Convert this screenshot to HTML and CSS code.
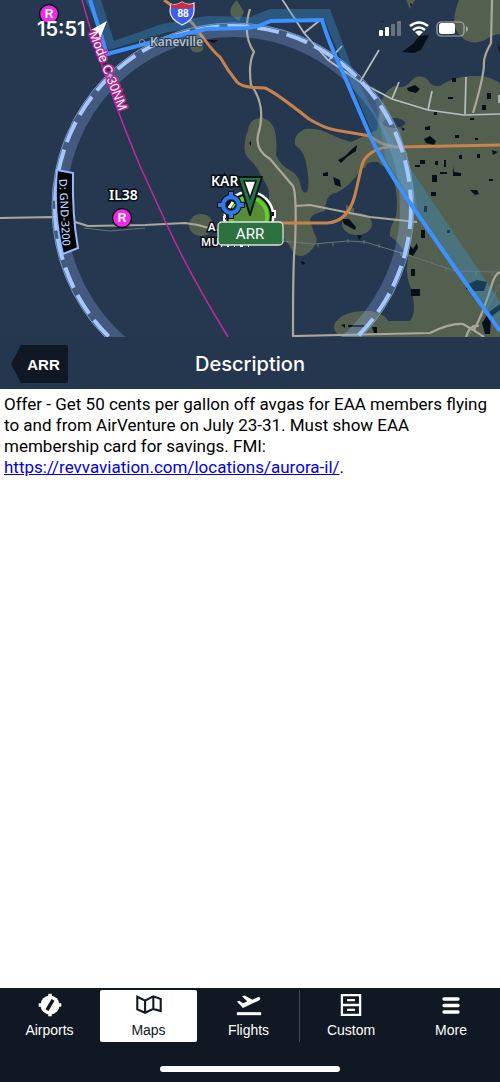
FILE: index.html
```html
<!DOCTYPE html>
<html lang="en">
<head>
<meta charset="utf-8">
<meta name="viewport" content="width=device-width, initial-scale=1">
<title>Description</title>
<link rel="stylesheet" href="styles.css">
</head>
<body>
<div class="app">
  <section class="map" aria-label="Map">
    <svg class="map-canvas" viewBox="0 0 500 337" preserveAspectRatio="xMidYMid slice">
      <rect width="500" height="337" fill="#26384f"/>
      <g fill="#53604f">
        <path d="M459 0 Q450 22 458 33 Q467 46 483 41 Q492 35 500 34 V0Z"/>
        <path d="M500 83 Q488 75 475 76 Q455 75 440 86 Q431 87 428 80 Q419 72 411 81 Q404 90 394 86 Q383 92 381 104 L377 130 Q360 138 351 142 Q340 139 330 134 Q319 128 305 129 Q293 134 295 145 Q305 151 307 168 Q310 185 307 192 Q302 195 300 182 Q296 173 291 171 Q280 165 276 155 Q279 122 263 118 Q250 117 248 130 Q240 152 250 160 Q258 167 262 178 Q272 190 268 203 L276 230 Q290 244 294 254 Q304 260 313 248 Q320 240 314 233 L310 220 Q310 214 325 211 Q326 193 336 193 Q350 187 362 168 L388 166 Q400 190 396 216 Q389 229 390 236 Q400 243 408 258 Q405 274 410 286 Q418 310 410 321 L388 321 Q385 314 371 311 Q343 310 335 323 Q331 332 343 337 H500Z"/>
        <ellipse cx="357" cy="224" rx="15" ry="11"/>
        <path d="M346 205 l8 3 v16 h-8z"/>
        <path d="M237 0 Q228 8 231 15 L239 21 L244 12Z"/>
        <path d="M406 0 L410 9 L415 0Z"/>
        <path d="M193 29 L190 48 Q195 56 203 50 L204 39Z"/>
        <ellipse cx="201" cy="225" rx="12" ry="11"/>
      </g>
      <g fill="#26384f">
        <ellipse cx="394" cy="123" rx="11" ry="5"/>
        <path d="M365 170 Q365 160 378 162 L390 173 L385 190 L365 195Z"/>
      </g>
      <g fill="#071019">
        <path d="M402 52 L413 44 L419 36 L429 35 L421 50 L414 53Z"/>
        <path d="M407 88 l8 -3 5 4 -4 4 -8 -2zM338 160 l7 -4 7 -7 5 -4 -1 6 -9 6 -6 6zM424 139 l6 -3 6 5 -2 4 -8 -2zM497 43 l3 5 v5zM333 177 l7 3 1 7 -6 -2zM409 244 l4 5 4 -6 1 5 -5 8 -4 -2zM466 285 l11 -5 10 2 -3 9 -9 0 -9 -2zM411 289 h9 v7 h-9zM411 269 h4 v7 h-4zM482 323 l7 -11 11 -8 v6 l-9 7 -1 17 h-5zM372 327 h5 v6 h-3zM348 325 h16 v2 h-16zM341 325 l4 -1 v4zM342 219 h7 l7 8 -1 3 -11 -6zM357 235 l5 1 -3 4zM323 173 l5 -1 v4h-5zM207 40 h11 l-4 3zM249 143 l2 -2 0 5zM301 261 l5 2 -4 2z"/>
        <path d="M432 175 h5 v7 h-5zM431 192 h5 v4 h-5zM440 172 h7 v2 h-7zM453 166 l1 6 7 1 v3 h-8zM470 190 h7 l2 4 -4 1zM489 179 h4 v2 h-4zM421 230 h4 v8 h-4zM424 206 h3 v6 h-3zM452 78 h4 v4 h-4zM487 93 h4 v6 h-4zM482 105 h4 v5 h-4zM448 97 h5 v2 h-5zM425 127 l5 -1 v4 h-5zM401 127 l4 2 -2 2zM455 135 h4 v3h-4zM470 118 h4 v2 h-4zM492 150 l6 2 -5 3zM477 154 h3 v4 h-3zM459 155 h3 v4 h-3zM420 160 h5 v4 h-5zM435 161 h3 v4h-3zM444 160 h2 v7 h-2zM415 165 h5 v2 h-5zM434 112 h3 v3 h-3zM475 138 h3 v2 h-3zM447 230 h3 v3 h-3zM381 21 l3 0 -2 1zM410 3 l2 1 -1 3z"/>
      </g>
      <g fill="none" stroke="#687575" stroke-width="1">
        <path d="M282 241 L313 244 L348 241 L365 242 L408 255 L455 271 L500 272M84 228 L110 231 L145 228"/>
        <path d="M288 239v4M302 241v4M318 243v4M333 242v4M348 239v4M364 240v4M379 244v4M401 252v4M432 261v4M446 267v4M476 272v4M492 271v4" />
        <path d="M468 337 L486 310 L500 284"/>
      </g>
      <g fill="none" stroke="#aba89b" stroke-width="2.2" stroke-linejoin="round">
        <path d="M0 218 L55 217 L72 221 L88 226 L145 225 L185 223 L198 225 L220 231"/>
        <path d="M250 9 Q242 35 254 52 Q248 63 251 85 Q267 106 258 135 Q255 150 270 159 L293 186 Q297 195 295 245 Q293 254 293 336 L430 333 Q450 323 463 324 Q474 330 484 337M474 330 Q484 311 492 284 Q495 274 500 272M466 337 Q470 324 479 326M295 206 L310 205 L370 217 L417 222M492 0 L491 43 Q483 57 484 65 Q483 80 473 113"/>
      </g>
      <g fill="none" stroke="#b8bec2" stroke-width="1.7">
        <path d="M280 -4 L304 33 L328 60 L360 82 L392 99 L428 110 L464 115 L500 114M304 33 L319 21M329 60 L342 46M360 82 L379 50M392 99 L399 82M428 110 L432 91M465 114 L466 77M499 95 v8"/>
      </g>
      <g fill="none" stroke="#c7834c" stroke-width="3">
        <path d="M164 0 Q185 15 194 25 Q212 51 220 57 Q228 71 237 82 Q242 88 265 88 Q275 92 309 119 Q324 128 335 130 L370 136 Q380 145 397 147 L500 145M398 147 Q380 146 371 153 Q363 158 361 169 L355 195 Q348 222 327 223 L265 223"/>
      </g>

      <ellipse cx="233" cy="207" rx="174" ry="177" fill="none" stroke="#92b7ff" stroke-opacity=".27" stroke-width="14"/>
      <ellipse cx="233" cy="207" rx="181" ry="184" fill="none" stroke="#7895bd" stroke-width="1"/>
      <path d="M85 0 L109 50 L168 32 L206 26 L252 26 L271 19 L324 19 L387 168 L412 206 L500 330 V302 L410 168 L370 105 L352 68 L330 9 H270 L250 17 L207 16 L162 24 L114 41 L101 0Z" fill="#3c9bdd" fill-opacity=".33"/>
      <path d="M373 85 L400 130 L412 180 L418 210 L386 160Z" fill="#82b7e4" fill-opacity=".18"/>
      <ellipse cx="233" cy="207" rx="178" ry="181" fill="none" stroke="#a5c7ff" stroke-width="4" stroke-dasharray="22 8"/>
      <path d="M90 0 L107 54 L160 40 L206 29 L247 28 L258 26 L271 21 L322 20 Q329 43 340 66 L371 138 Q385 167 412 206 L450 261 L500 331" fill="none" stroke="#3c91ff" stroke-width="4"/>
      <path d="M82 0 Q104 80 140 166 L167 225 Q190 275 228 337" fill="none" stroke="#bd2b9e" stroke-width="1.5"/>
      <text transform="translate(89 33) rotate(69)" class="mode-label">Mode C 30NM</text>
      <circle cx="142" cy="42" r="2.5" fill="none" stroke="#87969c"/>
      <text x="150" y="46" class="town-label">Kaneville</text>

      <path d="M57 170 L73 173 Q72 215 78 248 L63 254 Q53 214 57 170Z" fill="#000" stroke="#93baff" stroke-width="2"/>
      <text transform="translate(59 179) rotate(87)" class="altitude-label">D: GND-3200</text>

      <g stroke="#111" stroke-width="1.5" fill="#ef2aed">
        <circle cx="49" cy="14" r="9.5"/><circle cx="122" cy="218" r="9.5"/>
      </g>
      <text x="49" y="18" class="r-label">R</text>
      <text x="122" y="222" class="r-label">R</text>
      <text x="109" y="200" class="field-label">IL38</text>

      <path d="M171 4 Q176 6 182 2 Q188 6 194 3 L194 11 Q194 20 182 25 Q170 19 170 11Z" fill="#405ee8" stroke="#dce5ff" stroke-width="1.3"/>
      <path d="M171 4 Q176 6 182 2 Q188 6 193 4 V8 H171Z" fill="#d32938"/>
      <text x="183" y="17" class="shield-label">88</text>

      <circle cx="249" cy="216" r="23.5" fill="#578c38" stroke="#fff" stroke-width="4"/>
      <path d="M271 211 h4 v6 h-3M228 217 h-4 v4" fill="#111" stroke="#fff" stroke-width="2"/>
      <circle cx="249" cy="216" r="22" fill="#578c38" stroke="#111" stroke-width="2"/>
      <circle cx="249" cy="216" r="18" fill="none" stroke="#60cf2d" stroke-width="4"/>
      <circle cx="249" cy="216" r="16" fill="#578c38"/>
      <text x="211" y="186" class="field-label">KAR</text>
      <text x="208" y="231" class="small-map-label">A</text>
      <text x="201" y="246" class="small-map-label">MU</text>
      <path d="M221 246h1M227 246h2M234 246h1M240 246h3M248 246h1" stroke="#fff" stroke-width="2"/>
      <g>
        <g fill="none" stroke="#111" stroke-width="6"><circle cx="231" cy="205" r="8"/><path d="M231 191v7M231 212v7M217 205h7M238 205h7"/></g>
        <circle cx="231" cy="205" r="8" fill="#283a49" stroke="#2e79ed" stroke-width="4"/>
        <path d="M231 192v6M231 212v6M218 205h6M238 205h6" stroke="#2e79ed" stroke-width="4"/>
        <circle cx="231" cy="205" r="5" fill="#111"/><path d="M229 208 L233 202" stroke="#fff" stroke-width="3"/><path d="M232 208 L235 204" stroke="#65d734" stroke-width="2"/>
      </g>
      <path d="M238 177 H262 L250 215Z" fill="#246f43" stroke="#0b1714" stroke-width="2" stroke-linejoin="round"/>
      <path d="M244 181 H256 L250 198Z" fill="#fff" stroke="#111" stroke-width="1.5"/>
      <rect x="218" y="222" width="65" height="23" rx="4" fill="#2c713f" stroke="#d8e2da" stroke-width="1.3"/>
      <text x="250" y="239" class="pin-label">ARR</text>

      <path d="M91 30 L107 21 L100 38 L98 31Z" fill="#fff"/>
      <text x="37" y="36" class="clock">15:51</text>
      <g fill="#fff"><rect x="379" y="30" width="4" height="6" rx="1"/><rect x="385" y="27" width="4" height="9" rx="1"/><g opacity=".3"><rect x="391" y="24" width="4" height="12" rx="1"/><rect x="397" y="21" width="4" height="15" rx="1"/></g></g>
      <g fill="none" stroke="#fff" stroke-width="2.6"><path d="M410 26 Q419 19 428 26M413 30 Q419 25 425 30"/></g>
      <path d="M415 32 Q419 29 423 32 L419 36Z" fill="#fff"/>
      <rect x="437" y="22" width="27" height="14" rx="4" fill="none" stroke="#a8adad" stroke-width="1.2"/><rect x="439" y="23" width="16" height="11" rx="2.5" fill="#fff"/><path d="M466 26 q4 3 0 6Z" fill="#a8adad"/>
    </svg>
  </section>

  <header class="title-bar">
    <button class="back" type="button">ARR</button>
    <h1 class="title">Description</h1>
  </header>

  <main class="content">
    <p class="offer">Offer - Get 50 cents per gallon off avgas for EAA members flying to and from AirVenture on July 23-31. Must show EAA membership card for savings. FMI: <a href="https://revvaviation.com/locations/aurora-il/">https://revvaviation.com/locations/aurora-il/</a>.</p>
  </main>

  <footer class="footer">
    <nav class="tabs" aria-label="Main">
      <button class="tab" type="button">
        <svg class="icon" viewBox="0 0 30 30"><circle cx="15" cy="15" r="11" fill="currentColor"/><path d="M15 2v26M2 15h26" stroke="currentColor" stroke-width="4"/><path d="M11.500 21 L18.500 9" stroke="#101823" stroke-width="4"/></svg>
        <span>Airports</span>
      </button>
      <button class="tab selected" type="button" aria-current="page">
        <svg class="icon" viewBox="0 0 30 30" fill="none" stroke="currentColor" stroke-width="2.4"><path d="M1.500 5.500 L10.500 10 L20 5 L28.500 8 V22 L20 19.500 L10.500 24 L1.500 20ZM10.500 10V24M20 5V19.500"/></svg>
        <span>Maps</span>
      </button>
      <button class="tab" type="button">
        <svg class="icon" viewBox="0 0 30 30"><path d="M1 25H29" stroke="currentColor" stroke-width="3.500"/><path d="M1 11 L4 10 L8 13 L13 11 L7 5 L10 4 L19 9 L25 6 Q28 5 28 8 L26 10 L8 18.500Z" fill="currentColor"/></svg>
        <span>Flights</span>
      </button>
      <button class="tab divided" type="button">
        <svg class="icon" viewBox="0 0 30 30" fill="none" stroke="currentColor" stroke-width="2.6"><path d="M4.500 3.500H25.500V26.500H4.500ZM4.500 15H25.500M10.500 9.500H19.500M10.500 20.500H19.500"/></svg>
        <span>Custom</span>
      </button>
      <button class="tab" type="button">
        <svg class="icon" viewBox="0 0 30 30"><path d="M7 8H23M7 15.500H23M7 23H23" stroke="currentColor" stroke-width="4" stroke-linecap="round"/></svg>
        <span>More</span>
      </button>
    </nav>
    <div class="home-indicator"></div>
  </footer>
</div>
</body>
</html>
```

FILE: styles.css
```css
* {
  box-sizing: border-box;
}

body {
  margin: 0;
  background: #fff;
  color: #000;
  font-family: Roboto, "Liberation Sans", sans-serif;
}

.app {
  display: flex;
  flex-direction: column;
  min-height: 100vh;
}

.map {
  background: #26384f;
}

.map-canvas {
  display: block;
  width: 100%;
}

.mode-label {
  fill: #fff;
  stroke: #b52394;
  stroke-width: 3px;
  paint-order: stroke;
  font: 13px "Liberation Sans", sans-serif;
}

.town-label {
  fill: #b9c1c3;
  stroke: #26384f;
  stroke-width: 2px;
  paint-order: stroke;
  font: 600 12px "Noto Sans", sans-serif;
}

.altitude-label {
  fill: #b0ceff;
  font: 500 11px "Noto Sans", sans-serif;
}

.field-label,
.small-map-label {
  fill: #fff;
  stroke: #080d14;
  stroke-width: 3px;
  paint-order: stroke;
  font: 600 14px "Noto Sans", sans-serif;
}

.small-map-label {
  font-size: 11px;
}

.r-label,
.shield-label,
.pin-label {
  fill: #fff;
  text-anchor: middle;
  font: 700 12px "Liberation Sans", sans-serif;
}

.shield-label {
  font-size: 10px;
}

.pin-label {
  font: 400 15px Roboto, sans-serif;
}

.clock {
  fill: #fff;
  font: 600 20px Inter, sans-serif;
}

.title-bar {
  display: grid;
  grid-template-columns: 1fr auto 1fr;
  align-items: center;
  height: 52px;
  padding: 2px 11px 0;
  background: #25364f;
  color: #fff;
}

.back {
  justify-self: start;
  width: 57px;
  height: 38px;
  padding: 0 0 0 8px;
  border: 0;
  border-radius: 2px;
  background: #101823;
  clip-path: polygon(10px 0, 100% 0, 100% 100%, 10px 100%, 0 50%);
  color: #fff;
  font: 700 15px "Liberation Sans", sans-serif;
}

.title {
  margin: 0;
  font: 500 20px Inter, sans-serif;
}

.content {
  flex: 1;
  padding: 5px 4px;
}

.offer {
  margin: 0;
  font-size: 17px;
  line-height: 21px;
}

.offer a {
  color: #0000ee;
}

.footer {
  display: flex;
  flex-direction: column;
  align-items: center;
  gap: 24px;
  padding: 2px 0 10px;
  background: #101823;
}

.tabs {
  display: grid;
  grid-template-columns: 99fr 99fr 101fr 103fr 98fr;
  width: 100%;
}

.tab {
  display: flex;
  flex-direction: column;
  align-items: center;
  height: 52px;
  margin: 0 1px;
  padding: 2px 0 0;
  border: 0;
  border-radius: 2px;
  background: transparent;
  color: #fff;
  font: 500 14px/24px "Liberation Sans", sans-serif;
}

.tab.selected {
  background: #fff;
  color: #101823;
}

.tab.divided {
  margin: 0;
  border-left: 1px solid #464d58;
  border-radius: 0;
}

.icon {
  width: 30px;
  height: 30px;
}

.home-indicator {
  width: 36%;
  height: 6px;
  border-radius: 3px;
  background: #fff;
}
```
